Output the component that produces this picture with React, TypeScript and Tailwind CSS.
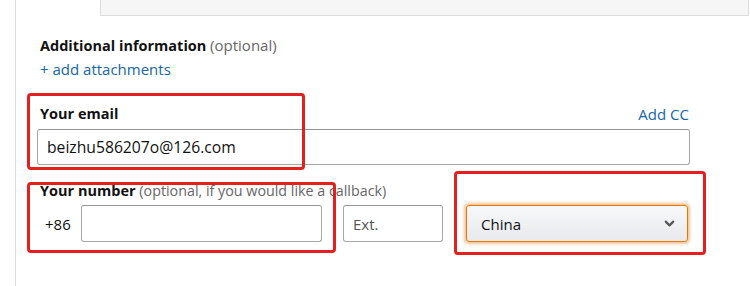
import { ChevronDown } from 'lucide-react'

export default function App() {
  return (
    <div className="relative w-[750px] h-[286px] overflow-hidden bg-white text-[#111] font-['Open_Sans',Arial,sans-serif] text-[14.5px] leading-[20px]">
      <div className="ml-[15px] h-full border-l border-[#dddddd] pl-[21px]">
        {/* bottom of the box above */}
        <div className="ml-[63px] w-[649px] h-[16px] bg-[#f6f6f6] border border-t-0 border-[#dddddd]" />

        <div className="ml-[3px] mt-[19px] h-5">
          <span className="font-bold">Additional information</span>{' '}
          <span className="text-[15px] text-[#666]">(optional)</span>
        </div>
        <a className="ml-[3px] mt-1 block h-5 text-[15px] text-[#1565a8]" href="#">
          + add attachments
        </a>

        <div className="mt-[25px] flex h-5 w-[653px] items-center justify-between pl-[3px] pr-[1px]">
          <span className="font-bold">Your email</span>
          <a className="text-[15px] text-[#1565a8]" href="#">Add CC</a>
        </div>
        <div className="mt-[5px] flex h-[36px] w-[653px] items-center rounded-[3px] border border-[#a6a6a6] border-t-[#949494] px-[9px] text-[15.7px]">
          beizhu586207o@126.com
        </div>

        <div className="mt-4 ml-[3px] h-5">
          <span className="font-bold">Your number</span>{' '}
          <span className="text-[14.3px] text-[#666]">(optional, if you would like a callback)</span>
        </div>
        <div className="mt-1 flex items-center text-[15px]">
          <span className="ml-[8px] w-[36px]">+86</span>
          <div className="h-[37px] w-[241px] rounded-[3px] border border-[#a6a6a6] border-t-[#949494]" />
          <div className="ml-[21px] flex h-[37px] w-[100px] items-center rounded-[3px] border border-[#a6a6a6] border-t-[#949494] px-[9px] text-[#555]">
            Ext.
          </div>
          <div className="ml-[23px] flex h-[37px] w-[222px] items-center justify-between rounded-[3px] border border-[#e77600] bg-gradient-to-b from-[#f7f8fa] to-[#e7e9ec] pl-[14px] pr-[10px] shadow-[0_0_3px_2px_rgba(228,121,17,0.45)]">
            <span>China</span>
            <ChevronDown size={15} strokeWidth={3.4} className="text-[#555]" />
          </div>
        </div>
      </div>

      {/* red annotation boxes */}
      <div className="absolute left-[27px] top-[93px] h-[77px] w-[278px] rounded-[4px] border-[3px] border-[#e3201f]" />
      <div className="absolute left-[27px] top-[182px] h-[71px] w-[309px] rounded-[4px] border-[3px] border-[#e3201f]" />
      <div className="absolute left-[454px] top-[171px] h-[84px] w-[252px] rounded-[4px] border-[3px] border-[#e3201f]" />
    </div>
  )
}
